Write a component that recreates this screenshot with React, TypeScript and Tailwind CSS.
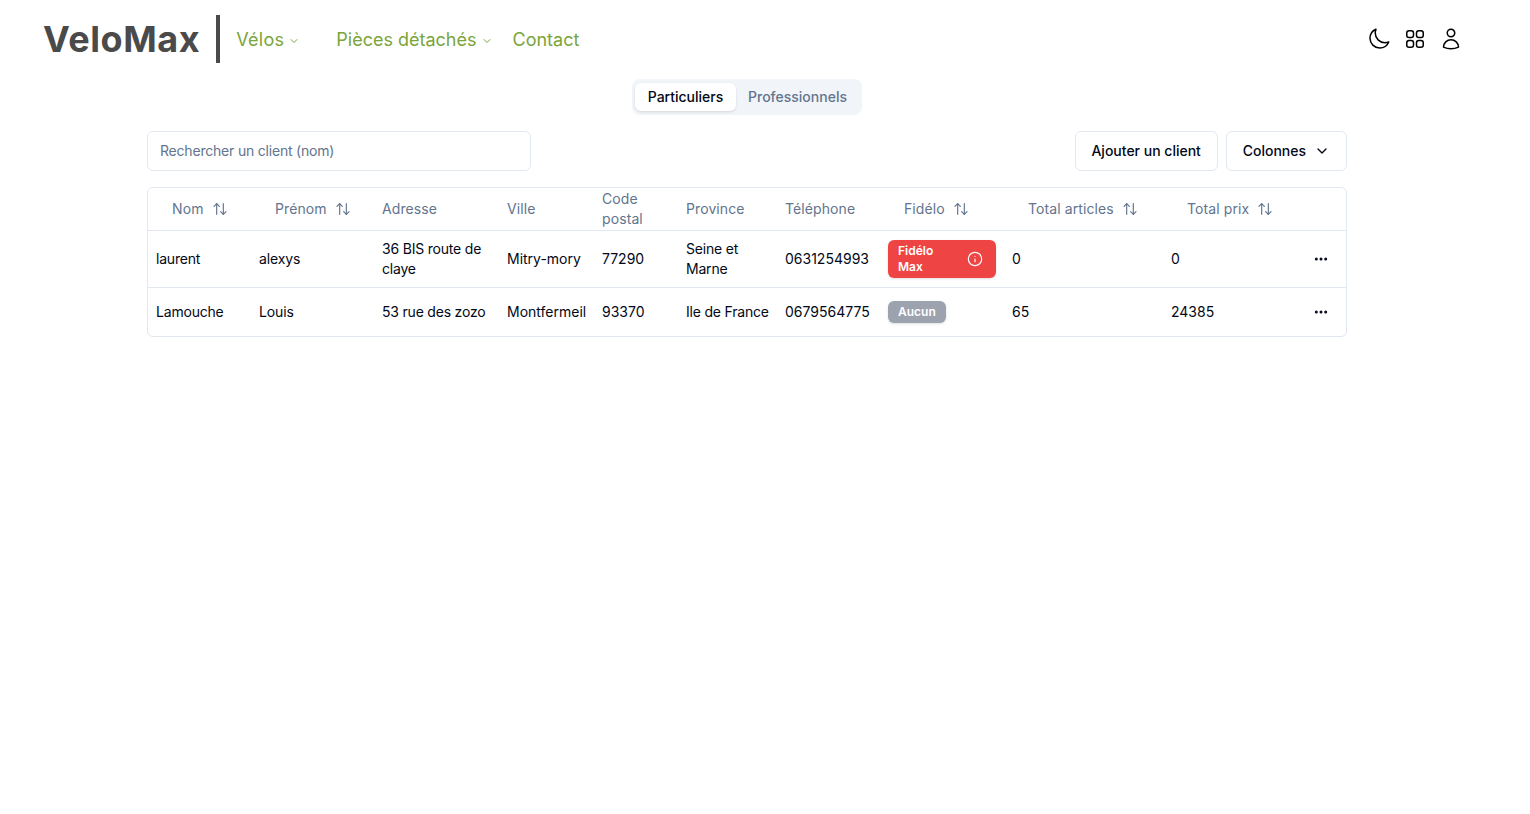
import { ArrowUpDown, ChevronDown, Ellipsis, Info } from 'lucide-react';
import { HiOutlineMoon, HiOutlineSquares2X2, HiOutlineUser } from 'react-icons/hi2';

type Client = {
  nom: string;
  prenom: string;
  adresse: string;
  ville: string;
  code: string;
  province: string;
  telephone: string;
  fidelo: 'max' | 'none';
  articles: string;
  prix: string;
};

const clients: Client[] = [
  {
    nom: 'laurent',
    prenom: 'alexys',
    adresse: '36 BIS route de claye',
    ville: 'Mitry-mory',
    code: '77290',
    province: 'Seine et Marne',
    telephone: '0631254993',
    fidelo: 'max',
    articles: '0',
    prix: '0',
  },
  {
    nom: 'Lamouche',
    prenom: 'Louis',
    adresse: '53 rue des zozo',
    ville: 'Montfermeil',
    code: '93370',
    province: 'Ile de France',
    telephone: '0679564775',
    fidelo: 'none',
    articles: '65',
    prix: '24385',
  },
];

function SortHeader({ label }: { label: string }) {
  return (
    <div className="flex items-center gap-2 pl-4">
      <span>{label}</span>
      <ArrowUpDown className="h-4 w-4" strokeWidth={1.75} />
    </div>
  );
}

function NavLink({ label, chevron, className }: { label: string; chevron?: boolean; className: string }) {
  return (
    <a className={`flex items-center gap-1 text-lg leading-7 text-[#7aa53a] ${className}`}>
      {label}
      {chevron && <ChevronDown className="mt-0.5 h-3 w-3" />}
    </a>
  );
}

export default function App() {
  return (
    <div className="min-h-screen bg-white font-['Inter','Liberation_Sans',sans-serif] text-[#020817]">
      <header className="flex h-[78px] items-center pr-[67px] pl-[43px]">
        <div className="text-4xl leading-10 font-bold tracking-[0.55px] text-[#4a4a4a]">VeloMax</div>
        <div className="mr-4 ml-4 h-12 w-1 bg-[#4a4a4a]" />
        <nav className="flex items-center pt-px">
          <NavLink label="Vélos" chevron className="mr-[36px] tracking-[0.3px]" />
          <NavLink label="Pièces détachés" chevron className="mr-[20px]" />
          <NavLink label="Contact" className="" />
        </nav>
        <div className="ml-auto flex items-center gap-3 text-black">
          <HiOutlineMoon className="h-6 w-6" />
          <HiOutlineSquares2X2 className="h-6 w-6" />
          <HiOutlineUser className="h-6 w-6" />
        </div>
      </header>

      <div className="pt-px pr-9">
        <div className="flex justify-center">
          <div className="flex h-9 items-center rounded-lg bg-slate-100 p-[3px] text-sm">
            <button className="h-7 w-[101px] rounded-md bg-white font-medium shadow-sm">Particuliers</button>
            <button className="h-7 w-[123px] rounded-md font-medium text-slate-500">Professionnels</button>
          </div>
        </div>

        <main className="mx-auto w-[1200px] pt-4">
          <div className="flex items-center justify-between pb-4">
            <input
              className="h-10 w-96 rounded-md border border-slate-200 bg-white px-3 pb-px text-sm tracking-[-0.2px] placeholder:text-slate-500"
              placeholder="Rechercher un client (nom)"
            />
            <div className="flex gap-2">
              <button className="h-10 w-[143px] rounded-md border border-slate-200 text-sm font-medium">
                Ajouter un client
              </button>
              <button className="flex h-10 items-center gap-2 rounded-md border border-slate-200 px-4 text-sm font-medium">
                Colonnes
                <ChevronDown className="h-4 w-4" />
              </button>
            </div>
          </div>

          <div className="rounded-md border border-slate-200">
            <table className="w-full table-fixed border-collapse text-sm">
              <colgroup>
                <col className="w-[103px]" />
                <col className="w-[123px]" />
                <col className="w-[125px]" />
                <col className="w-[95px]" />
                <col className="w-[84px]" />
                <col className="w-[99px]" />
                <col className="w-[103px]" />
                <col className="w-[124px]" />
                <col className="w-[159px]" />
                <col className="w-[134px]" />
                <col />
              </colgroup>
              <thead>
                <tr className="h-[42px] border-b border-slate-200 text-left tracking-[0.1px] text-slate-500">
                  <th className="px-2 font-normal"><SortHeader label="Nom" /></th>
                  <th className="px-2 font-normal"><SortHeader label="Prénom" /></th>
                  <th className="px-2 font-normal">Adresse</th>
                  <th className="px-2 font-normal">Ville</th>
                  <th className="px-2 font-normal">Code postal</th>
                  <th className="px-2 font-normal">Province</th>
                  <th className="px-2 font-normal">Téléphone</th>
                  <th className="px-2 font-normal"><SortHeader label="Fidélo" /></th>
                  <th className="px-2 font-normal"><SortHeader label="Total articles" /></th>
                  <th className="px-2 font-normal"><SortHeader label="Total prix" /></th>
                  <th />
                </tr>
              </thead>
              <tbody>
                {clients.map((c, i) => {
                  const cell = i === 0 ? 'px-2 pt-px' : 'px-2';
                  return (
                    <tr key={c.nom} className={i === 0 ? 'h-[57px] border-b border-slate-200' : 'h-[49px]'}>
                      <td className={`${cell} tracking-[-0.2px]`}>{c.nom}</td>
                      <td className={`${cell} tracking-[-0.1px]`}>{c.prenom}</td>
                      <td className={`${cell} tracking-[-0.2px]`}>{c.adresse}</td>
                      <td className={cell}>{c.ville}</td>
                      <td className={cell}>{c.code}</td>
                      <td className={`${cell} tracking-[-0.2px]`}>{c.province}</td>
                      <td className={`${cell} whitespace-nowrap`}>{c.telephone}</td>
                      <td className="px-2">
                        {c.fidelo === 'max' ? (
                          <span className="flex w-[108px] items-center justify-between rounded-md bg-[#ef4444] py-[3px] pr-[13px] pl-2.5 text-xs leading-4 font-semibold text-white shadow-sm">
                            <span className="w-12">Fidélo Max</span>
                            <Info className="h-4 w-4" strokeWidth={1.75} />
                          </span>
                        ) : (
                          <span className="inline-flex rounded-md bg-[#9ca3af] px-2.5 py-[3px] text-xs leading-4 font-semibold text-white shadow-sm">
                            Aucun
                          </span>
                        )}
                      </td>
                      <td className={cell}>{c.articles}</td>
                      <td className={cell}>{c.prix}</td>
                      <td className="px-2">
                        <button className="flex h-8 w-8 items-center justify-center">
                          <Ellipsis className="h-4 w-4" strokeWidth={2.5} />
                        </button>
                      </td>
                    </tr>
                  );
                })}
              </tbody>
            </table>
          </div>
        </main>
      </div>
    </div>
  );
}
